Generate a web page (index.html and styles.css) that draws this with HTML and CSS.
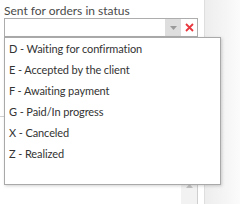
FILE: index.html
```html
<!DOCTYPE html>
<html>
<head>
<meta charset="utf-8">
<link rel="stylesheet" href="styles.css">
</head>
<body>
<div class="page">
  <div class="main">
    <div class="caption">Sent for orders in status</div>
    <div class="combo">
      <div class="combo-input"></div>
      <div class="combo-btn"><svg width="7" height="4" viewBox="0 0 7 4"><path d="M0 0h7L3.5 4z" fill="#9a9a9a"/></svg></div>
      <div class="combo-clear"><svg width="9" height="9" viewBox="0 0 9 9"><path d="M1 1L8 8M8 1L1 8" stroke="#e8383f" stroke-width="1.8"/></svg></div>
    </div>
    <div class="under">
      <div class="under-grid"><div class="under-row"></div></div>
      <div class="under-scroll"><svg width="7" height="4" viewBox="0 0 7 4"><path d="M0 4h7L3.5 0z" fill="#c4c4c4"/></svg></div>
    </div>
    <ul class="popup">
      <li>D - Waiting for confirmation</li>
      <li>E - Accepted by the client</li>
      <li>F - Awaiting payment</li>
      <li>G - Paid/In progress</li>
      <li>X - Canceled</li>
      <li>Z - Realized</li>
    </ul>
  </div>
  <div class="side"></div>
</div>
</body>
</html>
```
FILE: styles.css
```css
html, body {
  margin: 0;
  padding: 0;
  background: #ffffff;
}
body {
  font-family: Lato, "Open Sans", sans-serif;
  font-size: 12px;
  color: #3a3a3a;
}
.page {
  display: flex;
  width: 240px;
  height: 204px;
  overflow: hidden;
}
.main {
  position: relative;
  width: 205px;
  border-right: 1px solid #dedede;
  padding: 4px 0 0 4px;
  box-sizing: border-box;
  display: flex;
  flex-direction: column;
}
.side {
  flex: 1;
  background: linear-gradient(to right, #ededed, #fbfbfb);
}
.caption {
  height: 14px;
  line-height: 14px;
  color: #4a4a4a;
}
.combo {
  display: flex;
  width: 194px;
  height: 19px;
  border: 1px solid #adadad;
  box-sizing: border-box;
  background: #fff;
}
.combo-input {
  flex: 1;
}
.combo-btn {
  width: 16px;
  background: #dedede;
  display: flex;
  align-items: center;
  justify-content: center;
}
.combo-clear {
  width: 16px;
  display: flex;
  align-items: center;
  justify-content: center;
}
.under {
  flex: 1;
  display: flex;
  margin: 3px 0 0 -4px;
  width: 198px;
  border-right: 1px solid #cfcfcf;
  box-sizing: border-box;
}
.under-grid {
  flex: 1;
  padding-top: 76px;
}
.under-row {
  border-top: 1px solid #d0d0d0;
}
.under-scroll {
  width: 16px;
  background: #f2f2f2;
  display: flex;
  flex-direction: column;
  justify-content: flex-end;
  align-items: center;
  padding-bottom: 16px;
}
.popup {
  position: absolute;
  left: 4px;
  top: 37px;
  width: 217px;
  height: 148px;
  margin: 0;
  padding: 0;
  list-style: none;
  background: #fff;
  border: 1px solid #a9a9a9;
  box-sizing: border-box;
  box-shadow: 1px 1px 3px rgba(0, 0, 0, 0.18);
}
.popup li {
  height: 21px;
  line-height: 21px;
  padding-left: 4px;
  font-size: 11px;
  letter-spacing: -0.1px;
  color: #333;
  white-space: nowrap;
}
```
